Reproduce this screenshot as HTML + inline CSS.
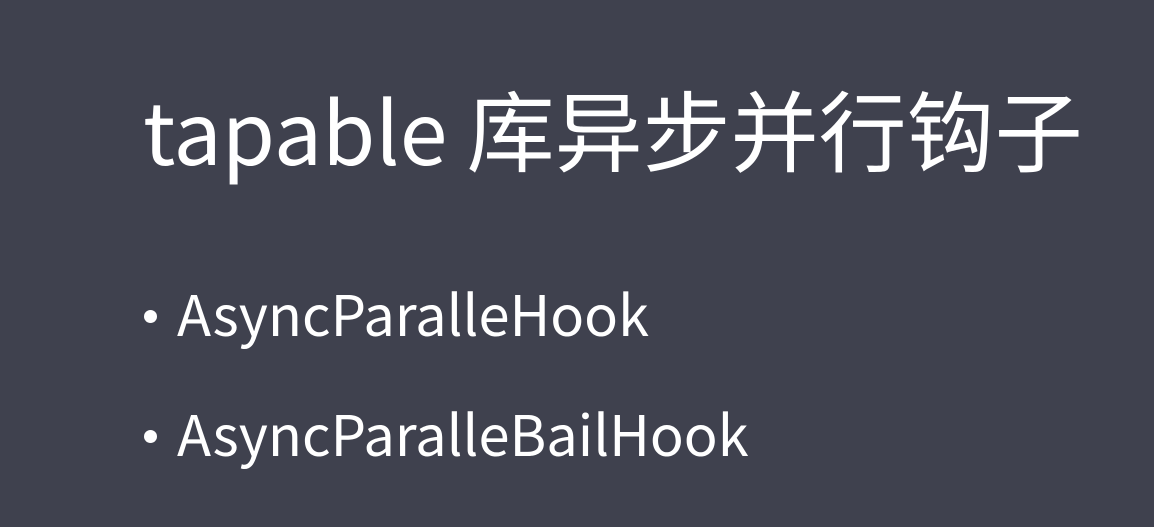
<!DOCTYPE html>
<html><head><meta charset="utf-8"><style>
html,body{margin:0;padding:0}
body{width:1154px;height:527px;background:#3f414e;overflow:hidden;position:relative;font-family:"Noto Sans CJK SC","Liberation Sans",sans-serif;color:#fff}
.t{position:absolute;left:143px;top:73px;font-size:88px;line-height:110px;white-space:nowrap}
.t .l{font-size:86px}
.b{position:absolute;left:177px;font-size:56px;line-height:70px;white-space:nowrap}
.d{position:absolute;left:144px;width:13px;height:13px;border-radius:50%;background:#fff}
</style></head><body>
<div class="t"><span class="l">tapable </span>库异步并行钩子</div>
<div class="d" style="top:310px"></div>
<div class="b" style="top:278px">AsyncParalleHook</div>
<div class="d" style="top:430px"></div>
<div class="b" style="top:398px">AsyncParalleBailHook</div>
</body></html>
